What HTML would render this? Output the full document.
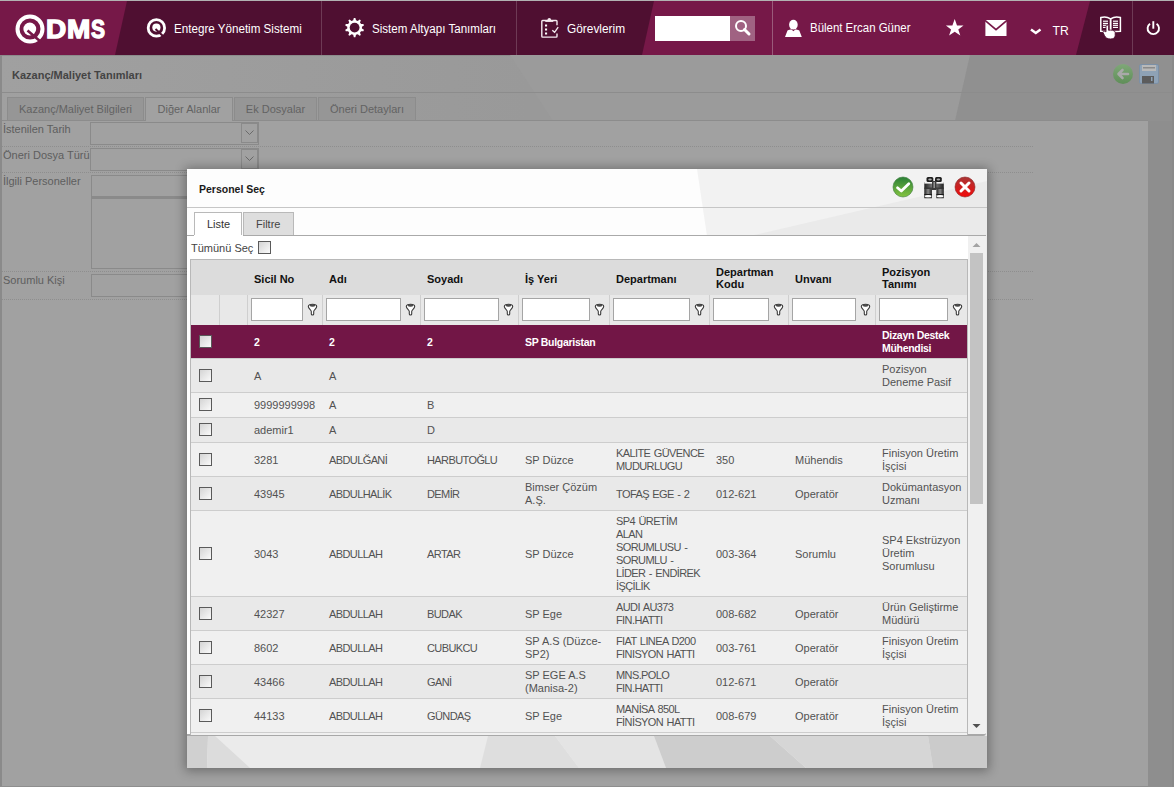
<!DOCTYPE html>
<html><head><meta charset="utf-8"><style>
*{margin:0;padding:0;box-sizing:border-box}
html,body{width:1174px;height:787px;overflow:hidden}
body{background:#9b9b9b;font-family:"Liberation Sans",sans-serif;position:relative}
.a{position:absolute}
.wt{position:absolute;color:#fff;font-size:11.6px;white-space:nowrap;line-height:14px}
.pt{position:absolute;color:#3b3b3b;font-size:11px;font-weight:bold;white-space:nowrap;line-height:13px}
.lbl{position:absolute;color:#5e5e5e;font-size:11px;white-space:nowrap;line-height:13px}
.inp{position:absolute;border:1px solid #8a8a8a}
.dots{position:absolute;height:1px;border-top:1px dotted #8e8e8e}
.ptab{position:absolute;border:1px solid #8c8c8c;border-bottom:none;background:#939393;color:#636363;font-size:11px;text-align:center;line-height:22px;white-space:nowrap}
.hd{position:absolute;color:#111;font-size:11px;font-weight:bold;white-space:nowrap;line-height:12px}
.c{position:absolute;color:#525252;font-size:11px;line-height:13px;white-space:nowrap}
.u{letter-spacing:-0.6px;word-spacing:1px}
.sel .c{color:#fff;font-weight:bold}
.cb{position:absolute;width:13px;height:13px;border:1px solid #5a5a5a;background:linear-gradient(135deg,#d4d4d4,#fafafa)}
.fin{position:absolute;background:#fff;border:1px solid #a5a5a5;top:3px;height:23px}
.vs{position:absolute;width:1px;background:#cfcfcf}
.hs{position:absolute;height:1px;background:#cdcdcd}
</style></head><body>
<div class="a" style="left:0;top:0;width:1174px;height:1px;background:#b2b2b2"></div>
<div class="a" style="left:0;top:1px;width:1174px;height:54px;background:#4f0f31;overflow:hidden">
<svg class="a" style="left:0;top:0" width="1174" height="54">
    <polygon points="0,0 127,0 115,54 0,54" fill="#761848"/>
    <polygon points="654,0 1090,0 1076,54 642,54" fill="#761848"/>
    <rect x="321" y="0" width="1" height="54" fill="#6e3a55"/>
    <rect x="516" y="0" width="1" height="54" fill="#6e3a55"/>
    <rect x="772" y="0" width="1" height="54" fill="#9a5a7a"/>
    <rect x="1132" y="0" width="1" height="54" fill="#6e3a55"/>
    <!-- logo Q (header y offset: abs y-1) -->
    <circle cx="30" cy="28" r="12.5" fill="none" stroke="#fff" stroke-width="4"/>
    <circle cx="29.8" cy="28" r="6.4" fill="#fff"/>
    <path d="M27.5 29.5 L41 41" stroke="#761848" stroke-width="2.6"/>
    <!-- nav Q icon -->
    <circle cx="156.4" cy="26.9" r="8.2" fill="none" stroke="#fff" stroke-width="2.8"/>
    <circle cx="156.4" cy="26.6" r="4.1" fill="#fff"/>
    <path d="M155.5 28 L164 36" stroke="#4f0f31" stroke-width="2"/>
    <!-- gear -->
    <polygon points="353.21,19.33 353.82,17.03 355.38,17.03 355.99,19.33 357.75,19.90 359.59,18.40 360.86,19.32 359.99,21.53 361.08,23.04 363.46,22.90 363.94,24.39 361.94,25.67 361.94,27.53 363.94,28.81 363.46,30.30 361.08,30.16 359.99,31.67 360.86,33.88 359.59,34.80 357.75,33.30 355.99,33.87 355.38,36.17 353.82,36.17 353.21,33.87 351.45,33.30 349.61,34.80 348.34,33.88 349.21,31.67 348.12,30.16 345.74,30.30 345.26,28.81 347.26,27.53 347.26,25.67 345.26,24.39 345.74,22.90 348.12,23.04 349.21,21.53 348.34,19.32 349.61,18.40 351.45,19.90" fill="#fff"/>
    <circle cx="354.6" cy="26.6" r="4.9" fill="#4f0f31"/>
    <!-- clipboard -->
    <path d="M557 24.2 L557 20.3 Q557 19.5 556.2 19.5 L542.6 19.5 Q541.8 19.5 541.8 20.3 L541.8 35.3 Q541.8 36.1 542.6 36.1 L556.2 36.1 Q557 36.1 557 35.3 L557 32.4" fill="none" stroke="#f4eaf0" stroke-width="1.4"/>
    <circle cx="549.3" cy="18.7" r="1.8" fill="#f4eaf0"/>
    <rect x="545.3" y="19" width="8" height="1.9" fill="#f4eaf0"/>
    <g fill="#fff"><rect x="545" y="23.5" width="2.1" height="2"/><rect x="545" y="27.5" width="2.1" height="2"/><rect x="545" y="31.5" width="2.1" height="2"/></g>
    <path d="M552.3 29.2 L554.6 31.3 L558.2 26.2" fill="none" stroke="#f4eaf0" stroke-width="1.4"/>
    <!-- search -->
    <rect x="655" y="15" width="75" height="25" fill="#fff"/>
    <rect x="730" y="15" width="25" height="25" fill="#a06282"/>
    <circle cx="741" cy="25" r="5" fill="none" stroke="#fff" stroke-width="2"/>
    <path d="M744.5 28.5 L749 33" stroke="#fff" stroke-width="3" stroke-linecap="round"/>
    <!-- user -->
    <ellipse cx="793.4" cy="23.7" rx="4.3" ry="4.9" fill="#fff"/>
    <path d="M785 35.9 L787.5 29.6 C789 28.8 790.5 28.6 791.5 28.6 L793.4 30.2 L795.3 28.6 C796.3 28.6 797.8 28.8 799.3 29.6 L801.8 35.9 Z" fill="#fff"/>
    <!-- star -->
    <polygon fill="#fff" points="954.7,18 957,24.5 963.5,24.5 958.3,28.5 960.3,34.5 954.7,30.8 949.1,34.5 951.1,28.5 945.9,24.5 952.4,24.5"/>
    <!-- mail -->
    <rect x="985.4" y="19" width="21.1" height="16" fill="#fff"/>
    <path d="M985 19.3 L996 28.6 L1007 19.3" fill="none" stroke="#761848" stroke-width="1.7"/>
    <!-- chevron -->
    <path d="M1031 28.5 L1035.8 32 L1040.5 28.5" fill="none" stroke="#fff" stroke-width="2.5"/>
    <!-- book -->
    <g fill="none" stroke="#fff" stroke-width="1.5">
      <path d="M1100.8 16.5 Q1106 14.8 1110.6 17.8 L1110.6 30.8 L1100.8 30.3 Z"/>
      <path d="M1110.6 17.8 Q1115.2 14.8 1120.4 16.5 L1120.4 30.3 L1110.6 30.8 Z"/>
    </g>
    <g fill="#fff">
      <rect x="1103" y="19.6" width="5" height="1.2"/><rect x="1103" y="21.8" width="5" height="1.2"/><rect x="1103" y="23.7" width="5" height="1.2"/><rect x="1103" y="25.8" width="5" height="1.2"/>
      <rect x="1113" y="19.6" width="5" height="1.2"/><rect x="1113" y="21.8" width="5" height="1.2"/><rect x="1113" y="23.7" width="5" height="1.2"/><rect x="1113" y="25.8" width="5" height="1.2"/>
    </g>
    <path d="M1106 25 C1106 23.8 1108.6 23.8 1108.6 25 L1108.6 29.3 C1111 28.8 1114.6 29.3 1115.2 31 L1115.2 34.5 C1115.2 37 1113 38 1110.5 38 C1107 38 1105.5 36.5 1104.5 34.5 L1103 31.5 C1102.8 30.3 1104 29.8 1106 30.8 Z" fill="#fff" stroke="#4f0f31" stroke-width="0.9"/>
    <!-- power -->
    <path d="M1150.03 22.73 A5.7 5.7 0 1 0 1156.57 22.73" fill="none" stroke="#fff" stroke-width="1.9"/>
    <path d="M1153.3 20.2 L1153.3 27.7" stroke="#fff" stroke-width="1.9"/>
</svg>

<div class="wt" style="left:45.7px;top:13px;font-size:25px;font-weight:bold;line-height:30px;-webkit-text-stroke:1.3px #fff;transform:scaleX(1.12);transform-origin:0 0">D</div>
<div class="wt" style="left:66.8px;top:13px;font-size:25px;font-weight:bold;line-height:30px;-webkit-text-stroke:1.3px #fff;transform:scaleX(1.12);transform-origin:0 0">M</div>
<div class="wt" style="left:90.9px;top:13px;font-size:25px;font-weight:bold;line-height:30px;-webkit-text-stroke:1.3px #fff;transform:scaleX(0.84);transform-origin:0 0">S</div>
<div class="wt" style="left:173.5px;top:20.7px;font-size:12.5px;transform:scaleX(0.93);transform-origin:0 0">Entegre Yönetim Sistemi</div>
<div class="wt" style="left:371.5px;top:20.7px;font-size:12.5px;transform:scaleX(0.927);transform-origin:0 0">Sistem Altyapı Tanımları</div>
<div class="wt" style="left:566.5px;top:20.7px;font-size:12.5px;transform:scaleX(0.95);transform-origin:0 0">Görevlerim</div>
<div class="wt" style="left:810px;top:20.3px;font-size:12.5px;transform:scaleX(0.915);transform-origin:0 0">Bülent Ercan Güner</div>
<div class="wt" style="left:1052.5px;top:22.7px;font-size:12.2px">TR</div>
</div>
<div class="a" style="left:0;top:55px;width:1174px;height:732px;background:#8e8e8e"></div>
<svg class="a" style="left:0;top:55px" width="1174" height="66"><defs><linearGradient id="tg" x1="0" x2="1" y1="0" y2="0"><stop offset="0" stop-color="#a0a0a0"/><stop offset="0.45" stop-color="#999"/></linearGradient></defs><rect width="1174" height="66" fill="url(#tg)"/><rect width="1174" height="1" fill="#8c8c8c"/><polygon points="510,0 970,0 955,66 553,66" fill="#9b9b9b"/><polygon points="970,0 1174,0 1174,66 955,66" fill="#909090"/></svg>
<div class="a" style="left:2px;top:121px;width:1146px;height:666px;background:#a1a1a1"></div>
<div class="a" style="left:0;top:55px;width:2px;height:732px;background:#8a8a8a"></div>
<div class="a" style="left:0;top:786px;width:1174px;height:1px;background:#8e8e8e"></div>
<div class="a" style="left:1172px;top:55px;width:2px;height:732px;background:#8a8a8a"></div>
<div class="pt" style="left:12px;top:68.5px;color:#444">Kazanç/Maliyet Tanımları</div>
<div class="a" style="left:2px;top:92px;width:1170px;height:1px;background:#8c8c8c"></div>
<svg class="a" style="left:1110px;top:62px" width="54" height="26">
<defs><linearGradient id="gg" x1="0" y1="0" x2="0" y2="1"><stop offset="0" stop-color="#7fa878"/><stop offset="1" stop-color="#5f8e58"/></linearGradient></defs>
<circle cx="13" cy="12" r="10" fill="url(#gg)"/>
<path d="M18 12 L9 12 M12.5 8 L8.5 12 L12.5 16" fill="none" stroke="#a9a9a9" stroke-width="2.6" stroke-linecap="round" stroke-linejoin="round"/>
<rect x="29.5" y="2.5" width="19" height="19" rx="1.5" fill="#8ea2b6" stroke="#7c90a6"/>
<rect x="32" y="3" width="14" height="6" fill="#b9b9b9"/>
<rect x="33" y="5" width="12" height="1.5" fill="#8a8a8a"/>
<rect x="32" y="14" width="12" height="7.5" fill="#5c5c5c"/>
<rect x="41" y="15" width="1.5" height="4" fill="#8ea2b6"/>
</svg>
<div class="ptab" style="left:7px;top:97px;width:137px;height:23px;background:#969696">Kazanç/Maliyet Bilgileri</div>
<div class="ptab" style="left:145px;top:97px;width:88px;height:24px;background:#a1a1a1">Diğer Alanlar</div>
<div class="ptab" style="left:234px;top:97px;width:83px;height:23px;background:#969696">Ek Dosyalar</div>
<div class="ptab" style="left:318px;top:97px;width:98px;height:23px;background:#969696">Öneri Detayları</div>
<div class="a" style="left:2px;top:120px;width:143px;height:1px;background:#8c8c8c"></div>
<div class="a" style="left:233px;top:120px;width:915px;height:1px;background:#8c8c8c"></div>
<div class="lbl" style="left:3px;top:122.6px">İstenilen Tarih</div>
<div class="lbl" style="left:3px;top:148.7px">Öneri Dosya Türü</div>
<div class="lbl" style="left:3px;top:174.5px">İlgili Personeller</div>
<div class="lbl" style="left:3px;top:273.5px">Sorumlu Kişi</div>
<div class="dots" style="left:2px;top:146px;width:1031px"></div>
<div class="dots" style="left:2px;top:172px;width:1031px"></div>
<div class="dots" style="left:2px;top:271px;width:1031px"></div>
<div class="dots" style="left:2px;top:299px;width:1031px"></div>
<div class="inp" style="left:90px;top:122px;width:169px;height:23px"></div>
<div class="inp" style="left:90px;top:148px;width:169px;height:23px"></div>
<div class="inp" style="left:241px;top:123px;width:17px;height:20px"></div>
<div class="inp" style="left:241px;top:149px;width:17px;height:20px"></div>
<svg class="a" style="left:244px;top:129px" width="11" height="8"><path d="M1.5 1.5 L5.5 5.5 L9.5 1.5" fill="none" stroke="#6a6a6a" stroke-width="1"/></svg>
<svg class="a" style="left:244px;top:155px" width="11" height="8"><path d="M1.5 1.5 L5.5 5.5 L9.5 1.5" fill="none" stroke="#6a6a6a" stroke-width="1"/></svg>
<div class="inp" style="left:91px;top:175px;width:200px;height:23px;border-bottom-width:2px"></div>
<div class="inp" style="left:91px;top:198px;width:200px;height:71px"></div>
<div class="inp" style="left:91px;top:274px;width:200px;height:23px"></div>
<div class="a" style="left:187px;top:169px;width:800px;height:599px;background:#ebebeb;box-shadow:0 1px 10px 2px rgba(0,0,0,.32)"></div>
<svg class="a" style="left:187px;top:169px" width="800" height="67"><rect width="800" height="67" fill="#fdfdfd"/><polygon points="510,0 800,0 800,67 520,67" fill="#f2f2f2"/><polygon points="563,67 800,12 800,67" fill="#eaeaea"/><rect x="0" y="38" width="800" height="1" fill="#c6c6c6"/></svg>
<div class="hd" style="left:199px;top:183px;font-size:10.5px;color:#1a1a1a">Personel Seç</div>
<svg class="a" style="left:890px;top:174px" width="90" height="28">
<defs>
<linearGradient id="gc" x1="0" y1="0" x2="0" y2="1"><stop offset="0" stop-color="#2a7f36"/><stop offset="1" stop-color="#85c441"/></linearGradient>
<linearGradient id="rc" x1="0" y1="0" x2="0" y2="1"><stop offset="0" stop-color="#a83535"/><stop offset="1" stop-color="#f30b0b"/></linearGradient>
<linearGradient id="bb" x1="0" y1="0" x2="1" y2="0"><stop offset="0" stop-color="#222"/><stop offset="0.5" stop-color="#8a8a8a"/><stop offset="1" stop-color="#222"/></linearGradient>
</defs>
<circle cx="13" cy="13" r="10" fill="url(#gc)" stroke="#3a7a3a" stroke-width="0.6"/>
<path d="M7.5 13.8 L11.3 17 L18.8 9.8" fill="none" stroke="#fff" stroke-width="2.8" stroke-linecap="round" stroke-linejoin="round"/>
<g>
<rect x="36.5" y="3" width="6.8" height="5" rx="1.5" fill="#1e1e1e"/>
<rect x="45" y="3" width="6.8" height="5" rx="1.5" fill="#1e1e1e"/>
<ellipse cx="40" cy="5.5" rx="1.8" ry="0.9" fill="#aaa"/>
<ellipse cx="48.4" cy="5.5" rx="1.8" ry="0.9" fill="#aaa"/>
<rect x="34.3" y="8" width="19.5" height="7" fill="url(#bb)"/>
<rect x="34.3" y="8" width="19.5" height="1.6" fill="#f4f4f4"/>
<rect x="34.3" y="13.6" width="19.5" height="1.2" fill="#333"/>
<rect x="42" y="7" width="4.4" height="9" fill="#3a3a3a"/>
<rect x="43.5" y="8" width="1.4" height="6" fill="#999"/>
<rect x="34.3" y="15" width="7.6" height="9" fill="url(#bb)"/>
<rect x="46.4" y="15" width="7.4" height="9" fill="url(#bb)"/>
<rect x="34.3" y="20" width="7.6" height="1" fill="#1a1a1a"/>
<rect x="46.4" y="20" width="7.4" height="1" fill="#1a1a1a"/>
<ellipse cx="38.1" cy="22.2" rx="3.2" ry="1.2" fill="#fff"/>
<ellipse cx="50.1" cy="22.2" rx="3.2" ry="1.2" fill="#fff"/>
<rect x="34.3" y="23.5" width="7.6" height="0.8" fill="#444"/>
<rect x="46.4" y="23.5" width="7.4" height="0.8" fill="#444"/>
</g>
<circle cx="75" cy="13" r="10" fill="url(#rc)" stroke="#8a2020" stroke-width="0.6"/>
<path d="M71 9 L79 17 M79 9 L71 17" stroke="#fff" stroke-width="3" stroke-linecap="round"/>
</svg>

<div class="a" style="left:194px;top:212px;width:48px;height:24px;background:#fff;border:1px solid #b9b9b9;border-bottom:none"></div>
<div class="c" style="left:207px;top:218px;color:#333">Liste</div>
<div class="a" style="left:243px;top:212px;width:51px;height:23px;background:#dedede;border:1px solid #b9b9b9;border-bottom:none"></div>
<div class="c" style="left:256px;top:218px;color:#444">Filtre</div>
<div class="a" style="left:187px;top:235px;width:799px;height:501px;background:#fff;border-top:1px solid #a9a9a9;border-bottom:2px solid #a8a8a8;border-radius:0 0 3px 0"></div>
<div class="a" style="left:968px;top:236px;width:18px;height:498px;background:#f0f0f0;border-radius:0 0 3px 0"></div>
<div class="a" style="left:242px;top:235px;width:1px;height:1px;background:#fff"></div>
<div class="a" style="left:194px;top:235px;width:48px;height:1px;background:#fff"></div>
<div class="c" style="left:191px;top:242px;color:#444">Tümünü Seç</div>
<div class="cb" style="left:258px;top:241px"></div>
<div class="a" style="left:970px;top:253px;width:13px;height:251px;background:#c3c3c3"></div>
<svg class="a" style="left:971px;top:241px" width="11" height="8"><path d="M1.5 6 L5.5 2 L9.5 6 Z" fill="#a3a3a3"/></svg>
<svg class="a" style="left:971px;top:722px" width="11" height="8"><path d="M1.5 2 L5.5 6 L9.5 2 Z" fill="#505050"/></svg>
<div class="a" style="left:190px;top:259px;width:778px;height:476px;border:1px solid #b8b8b8;border-bottom:none;background:#f0f0f0"></div>
<div class="a" style="left:191px;top:260px;width:776px;height:35px;background:#dcdcdc"></div>
<div class="a" style="left:191px;top:295px;width:776px;height:30px;background:#e8e8e8"></div>
<div class="vs" style="left:219px;top:295px;height:30px"></div>
<div class="vs" style="left:247px;top:295px;height:30px"></div>
<div class="vs" style="left:322px;top:295px;height:30px"></div>
<div class="vs" style="left:420px;top:295px;height:30px"></div>
<div class="vs" style="left:518px;top:295px;height:30px"></div>
<div class="vs" style="left:609px;top:295px;height:30px"></div>
<div class="vs" style="left:709px;top:295px;height:30px"></div>
<div class="vs" style="left:788px;top:295px;height:30px"></div>
<div class="vs" style="left:875px;top:295px;height:30px"></div>
<div class="hd" style="left:254px;top:273px">Sicil No</div>
<div class="hd" style="left:329px;top:273px">Adı</div>
<div class="hd" style="left:427px;top:273px">Soyadı</div>
<div class="hd" style="left:525px;top:273px">İş Yeri</div>
<div class="hd" style="left:616px;top:273px">Departmanı</div>
<div class="hd" style="left:716px;top:266px">Departman<br>Kodu</div>
<div class="hd" style="left:795px;top:273px">Unvanı</div>
<div class="hd" style="left:882px;top:266px">Pozisyon<br>Tanımı</div>
<div class="fin" style="left:251px;top:298px;width:52px"></div>
<svg class="a" style="left:307px;top:302px" width="11" height="15"><path d="M1.3 4.5 C1.3 1.4 9.7 1.4 9.7 4.5 C9.7 6.5 6.7 8 6.7 9.5 L6.7 12 C6.7 13.3 4.3 13.3 4.3 12 L4.3 9.5 C4.3 8 1.3 6.5 1.3 4.5 Z" fill="#fff" stroke="#3a3a3a" stroke-width="1.1"/><ellipse cx="5.5" cy="3.5" rx="2.7" ry="1.3" fill="#4a4a4a"/></svg>
<div class="fin" style="left:326px;top:298px;width:75px"></div>
<svg class="a" style="left:405px;top:302px" width="11" height="15"><path d="M1.3 4.5 C1.3 1.4 9.7 1.4 9.7 4.5 C9.7 6.5 6.7 8 6.7 9.5 L6.7 12 C6.7 13.3 4.3 13.3 4.3 12 L4.3 9.5 C4.3 8 1.3 6.5 1.3 4.5 Z" fill="#fff" stroke="#3a3a3a" stroke-width="1.1"/><ellipse cx="5.5" cy="3.5" rx="2.7" ry="1.3" fill="#4a4a4a"/></svg>
<div class="fin" style="left:424px;top:298px;width:75px"></div>
<svg class="a" style="left:503px;top:302px" width="11" height="15"><path d="M1.3 4.5 C1.3 1.4 9.7 1.4 9.7 4.5 C9.7 6.5 6.7 8 6.7 9.5 L6.7 12 C6.7 13.3 4.3 13.3 4.3 12 L4.3 9.5 C4.3 8 1.3 6.5 1.3 4.5 Z" fill="#fff" stroke="#3a3a3a" stroke-width="1.1"/><ellipse cx="5.5" cy="3.5" rx="2.7" ry="1.3" fill="#4a4a4a"/></svg>
<div class="fin" style="left:522px;top:298px;width:68px"></div>
<svg class="a" style="left:594px;top:302px" width="11" height="15"><path d="M1.3 4.5 C1.3 1.4 9.7 1.4 9.7 4.5 C9.7 6.5 6.7 8 6.7 9.5 L6.7 12 C6.7 13.3 4.3 13.3 4.3 12 L4.3 9.5 C4.3 8 1.3 6.5 1.3 4.5 Z" fill="#fff" stroke="#3a3a3a" stroke-width="1.1"/><ellipse cx="5.5" cy="3.5" rx="2.7" ry="1.3" fill="#4a4a4a"/></svg>
<div class="fin" style="left:613px;top:298px;width:77px"></div>
<svg class="a" style="left:694px;top:302px" width="11" height="15"><path d="M1.3 4.5 C1.3 1.4 9.7 1.4 9.7 4.5 C9.7 6.5 6.7 8 6.7 9.5 L6.7 12 C6.7 13.3 4.3 13.3 4.3 12 L4.3 9.5 C4.3 8 1.3 6.5 1.3 4.5 Z" fill="#fff" stroke="#3a3a3a" stroke-width="1.1"/><ellipse cx="5.5" cy="3.5" rx="2.7" ry="1.3" fill="#4a4a4a"/></svg>
<div class="fin" style="left:713px;top:298px;width:56px"></div>
<svg class="a" style="left:773px;top:302px" width="11" height="15"><path d="M1.3 4.5 C1.3 1.4 9.7 1.4 9.7 4.5 C9.7 6.5 6.7 8 6.7 9.5 L6.7 12 C6.7 13.3 4.3 13.3 4.3 12 L4.3 9.5 C4.3 8 1.3 6.5 1.3 4.5 Z" fill="#fff" stroke="#3a3a3a" stroke-width="1.1"/><ellipse cx="5.5" cy="3.5" rx="2.7" ry="1.3" fill="#4a4a4a"/></svg>
<div class="fin" style="left:792px;top:298px;width:64px"></div>
<svg class="a" style="left:860px;top:302px" width="11" height="15"><path d="M1.3 4.5 C1.3 1.4 9.7 1.4 9.7 4.5 C9.7 6.5 6.7 8 6.7 9.5 L6.7 12 C6.7 13.3 4.3 13.3 4.3 12 L4.3 9.5 C4.3 8 1.3 6.5 1.3 4.5 Z" fill="#fff" stroke="#3a3a3a" stroke-width="1.1"/><ellipse cx="5.5" cy="3.5" rx="2.7" ry="1.3" fill="#4a4a4a"/></svg>
<div class="fin" style="left:879px;top:298px;width:69px"></div>
<svg class="a" style="left:952px;top:302px" width="11" height="15"><path d="M1.3 4.5 C1.3 1.4 9.7 1.4 9.7 4.5 C9.7 6.5 6.7 8 6.7 9.5 L6.7 12 C6.7 13.3 4.3 13.3 4.3 12 L4.3 9.5 C4.3 8 1.3 6.5 1.3 4.5 Z" fill="#fff" stroke="#3a3a3a" stroke-width="1.1"/><ellipse cx="5.5" cy="3.5" rx="2.7" ry="1.3" fill="#4a4a4a"/></svg>
<div class="a" style="left:191px;top:325px;width:776px;height:33px;background:#721646"></div>
<div class="cb" style="left:199px;top:335px"></div>
<div class="c" style="left:254px;top:336.2px;color:#fff;font-weight:bold;font-size:10.5px;letter-spacing:-0.3px;">2</div>
<div class="c" style="left:329px;top:336.2px;color:#fff;font-weight:bold;font-size:10.5px;letter-spacing:-0.3px;">2</div>
<div class="c" style="left:427px;top:336.2px;color:#fff;font-weight:bold;font-size:10.5px;letter-spacing:-0.3px;">2</div>
<div class="c" style="left:525px;top:336.2px;color:#fff;font-weight:bold;font-size:10.5px;letter-spacing:-0.3px;">SP Bulgaristan</div>
<div class="c" style="left:882px;top:329.0px;color:#fff;font-weight:bold;font-size:10.5px;letter-spacing:-0.3px;">Dizayn Destek<br>Mühendisi</div>
<div class="a" style="left:191px;top:358px;width:776px;height:34px;background:#e9e9e9"></div>
<div class="hs" style="left:191px;top:358px;width:776px"></div>
<div class="cb" style="left:199px;top:369px"></div>
<div class="c u" style="left:254px;top:369.7px;">A</div>
<div class="c u" style="left:329px;top:369.7px;">A</div>
<div class="c" style="left:882px;top:362.5px;">Pozisyon<br>Deneme Pasif</div>
<div class="a" style="left:191px;top:392px;width:776px;height:25px;background:#f0f0f0"></div>
<div class="hs" style="left:191px;top:392px;width:776px"></div>
<div class="cb" style="left:199px;top:398px"></div>
<div class="c" style="left:254px;top:399.2px;">9999999998</div>
<div class="c u" style="left:329px;top:399.2px;">A</div>
<div class="c u" style="left:427px;top:399.2px;">B</div>
<div class="a" style="left:191px;top:417px;width:776px;height:25px;background:#e9e9e9"></div>
<div class="hs" style="left:191px;top:417px;width:776px"></div>
<div class="cb" style="left:199px;top:423px"></div>
<div class="c" style="left:254px;top:424.2px;">ademir1</div>
<div class="c u" style="left:329px;top:424.2px;">A</div>
<div class="c u" style="left:427px;top:424.2px;">D</div>
<div class="a" style="left:191px;top:442px;width:776px;height:34px;background:#f0f0f0"></div>
<div class="hs" style="left:191px;top:442px;width:776px"></div>
<div class="cb" style="left:199px;top:453px"></div>
<div class="c" style="left:254px;top:453.7px;">3281</div>
<div class="c u" style="left:329px;top:453.7px;">ABDULĞANİ</div>
<div class="c u" style="left:427px;top:453.7px;">HARBUTOĞLU</div>
<div class="c" style="left:525px;top:453.7px;">SP Düzce</div>
<div class="c u" style="left:616px;top:446.5px;">KALITE GÜVENCE<br>MUDURLUGU</div>
<div class="c" style="left:716px;top:453.7px;">350</div>
<div class="c" style="left:795px;top:453.7px;">Mühendis</div>
<div class="c" style="left:882px;top:446.5px;">Finisyon Üretim<br>İşçisi</div>
<div class="a" style="left:191px;top:476px;width:776px;height:34px;background:#e9e9e9"></div>
<div class="hs" style="left:191px;top:476px;width:776px"></div>
<div class="cb" style="left:199px;top:487px"></div>
<div class="c" style="left:254px;top:487.7px;">43945</div>
<div class="c u" style="left:329px;top:487.7px;">ABDULHALİK</div>
<div class="c u" style="left:427px;top:487.7px;">DEMİR</div>
<div class="c" style="left:525px;top:480.5px;">Bimser Çözüm<br>A.Ş.</div>
<div class="c u" style="left:616px;top:487.7px;">TOFAŞ EGE - 2</div>
<div class="c" style="left:716px;top:487.7px;">012-621</div>
<div class="c" style="left:795px;top:487.7px;">Operatör</div>
<div class="c" style="left:882px;top:480.5px;">Dokümantasyon<br>Uzmanı</div>
<div class="a" style="left:191px;top:510px;width:776px;height:86px;background:#f0f0f0"></div>
<div class="hs" style="left:191px;top:510px;width:776px"></div>
<div class="cb" style="left:199px;top:547px"></div>
<div class="c" style="left:254px;top:547.7px;">3043</div>
<div class="c u" style="left:329px;top:547.7px;">ABDULLAH</div>
<div class="c u" style="left:427px;top:547.7px;">ARTAR</div>
<div class="c" style="left:525px;top:547.7px;">SP Düzce</div>
<div class="c u" style="left:616px;top:514.5px;">SP4 ÜRETİM<br>ALAN<br>SORUMLUSU -<br>SORUMLU -<br>LİDER - ENDİREK<br>İŞÇİLİK</div>
<div class="c" style="left:716px;top:547.7px;">003-364</div>
<div class="c" style="left:795px;top:547.7px;">Sorumlu</div>
<div class="c" style="left:882px;top:534.0px;">SP4 Ekstrüzyon<br>Üretim<br>Sorumlusu</div>
<div class="a" style="left:191px;top:596px;width:776px;height:34px;background:#e9e9e9"></div>
<div class="hs" style="left:191px;top:596px;width:776px"></div>
<div class="cb" style="left:199px;top:607px"></div>
<div class="c" style="left:254px;top:607.7px;">42327</div>
<div class="c u" style="left:329px;top:607.7px;">ABDULLAH</div>
<div class="c u" style="left:427px;top:607.7px;">BUDAK</div>
<div class="c" style="left:525px;top:607.7px;">SP Ege</div>
<div class="c u" style="left:616px;top:600.5px;">AUDI AU373<br>FIN.HATTI</div>
<div class="c" style="left:716px;top:607.7px;">008-682</div>
<div class="c" style="left:795px;top:607.7px;">Operatör</div>
<div class="c" style="left:882px;top:600.5px;">Ürün Geliştirme<br>Müdürü</div>
<div class="a" style="left:191px;top:630px;width:776px;height:34px;background:#f0f0f0"></div>
<div class="hs" style="left:191px;top:630px;width:776px"></div>
<div class="cb" style="left:199px;top:641px"></div>
<div class="c" style="left:254px;top:641.7px;">8602</div>
<div class="c u" style="left:329px;top:641.7px;">ABDULLAH</div>
<div class="c u" style="left:427px;top:641.7px;">CUBUKCU</div>
<div class="c" style="left:525px;top:634.5px;">SP A.S (Düzce-<br>SP2)</div>
<div class="c u" style="left:616px;top:634.5px;">FIAT LINEA D200<br>FINISYON HATTI</div>
<div class="c" style="left:716px;top:641.7px;">003-761</div>
<div class="c" style="left:795px;top:641.7px;">Operatör</div>
<div class="c" style="left:882px;top:634.5px;">Finisyon Üretim<br>İşçisi</div>
<div class="a" style="left:191px;top:664px;width:776px;height:34px;background:#e9e9e9"></div>
<div class="hs" style="left:191px;top:664px;width:776px"></div>
<div class="cb" style="left:199px;top:675px"></div>
<div class="c" style="left:254px;top:675.7px;">43466</div>
<div class="c u" style="left:329px;top:675.7px;">ABDULLAH</div>
<div class="c u" style="left:427px;top:675.7px;">GANİ</div>
<div class="c" style="left:525px;top:668.5px;">SP EGE A.S<br>(Manisa-2)</div>
<div class="c u" style="left:616px;top:668.5px;">MNS.POLO<br>FIN.HATTI</div>
<div class="c" style="left:716px;top:675.7px;">012-671</div>
<div class="c" style="left:795px;top:675.7px;">Operatör</div>
<div class="a" style="left:191px;top:698px;width:776px;height:34px;background:#f0f0f0"></div>
<div class="hs" style="left:191px;top:698px;width:776px"></div>
<div class="cb" style="left:199px;top:709px"></div>
<div class="c" style="left:254px;top:709.7px;">44133</div>
<div class="c u" style="left:329px;top:709.7px;">ABDULLAH</div>
<div class="c u" style="left:427px;top:709.7px;">GÜNDAŞ</div>
<div class="c" style="left:525px;top:709.7px;">SP Ege</div>
<div class="c u" style="left:616px;top:702.5px;">MANİSA 850L<br>FİNİSYON HATTI</div>
<div class="c" style="left:716px;top:709.7px;">008-679</div>
<div class="c" style="left:795px;top:709.7px;">Operatör</div>
<div class="c" style="left:882px;top:702.5px;">Finisyon Üretim<br>İşçisi</div>
<div class="hs" style="left:191px;top:732px;width:776px"></div>
<svg class="a" style="left:187px;top:736px" width="800" height="32"><rect width="800" height="32" fill="#ebebeb"/><polygon points="0,0 21,0 20,32 0,32" fill="#d0d0d0"/><polygon points="21,0 28,0 63,32 20,32" fill="#dcdcdc"/><polygon points="301,0 368,0 392,32 293,32" fill="#dedede"/><polygon points="368,0 467,0 479,32 392,32" fill="#e4e4e4"/><polygon points="467,0 583,0 619,32 479,32" fill="#cdcdcd"/><polygon points="583,0 741,0 746,32 619,32" fill="#d6d6d6"/><polygon points="741,0 800,0 800,32 746,32" fill="#cbcbcb"/></svg>
</body></html>
